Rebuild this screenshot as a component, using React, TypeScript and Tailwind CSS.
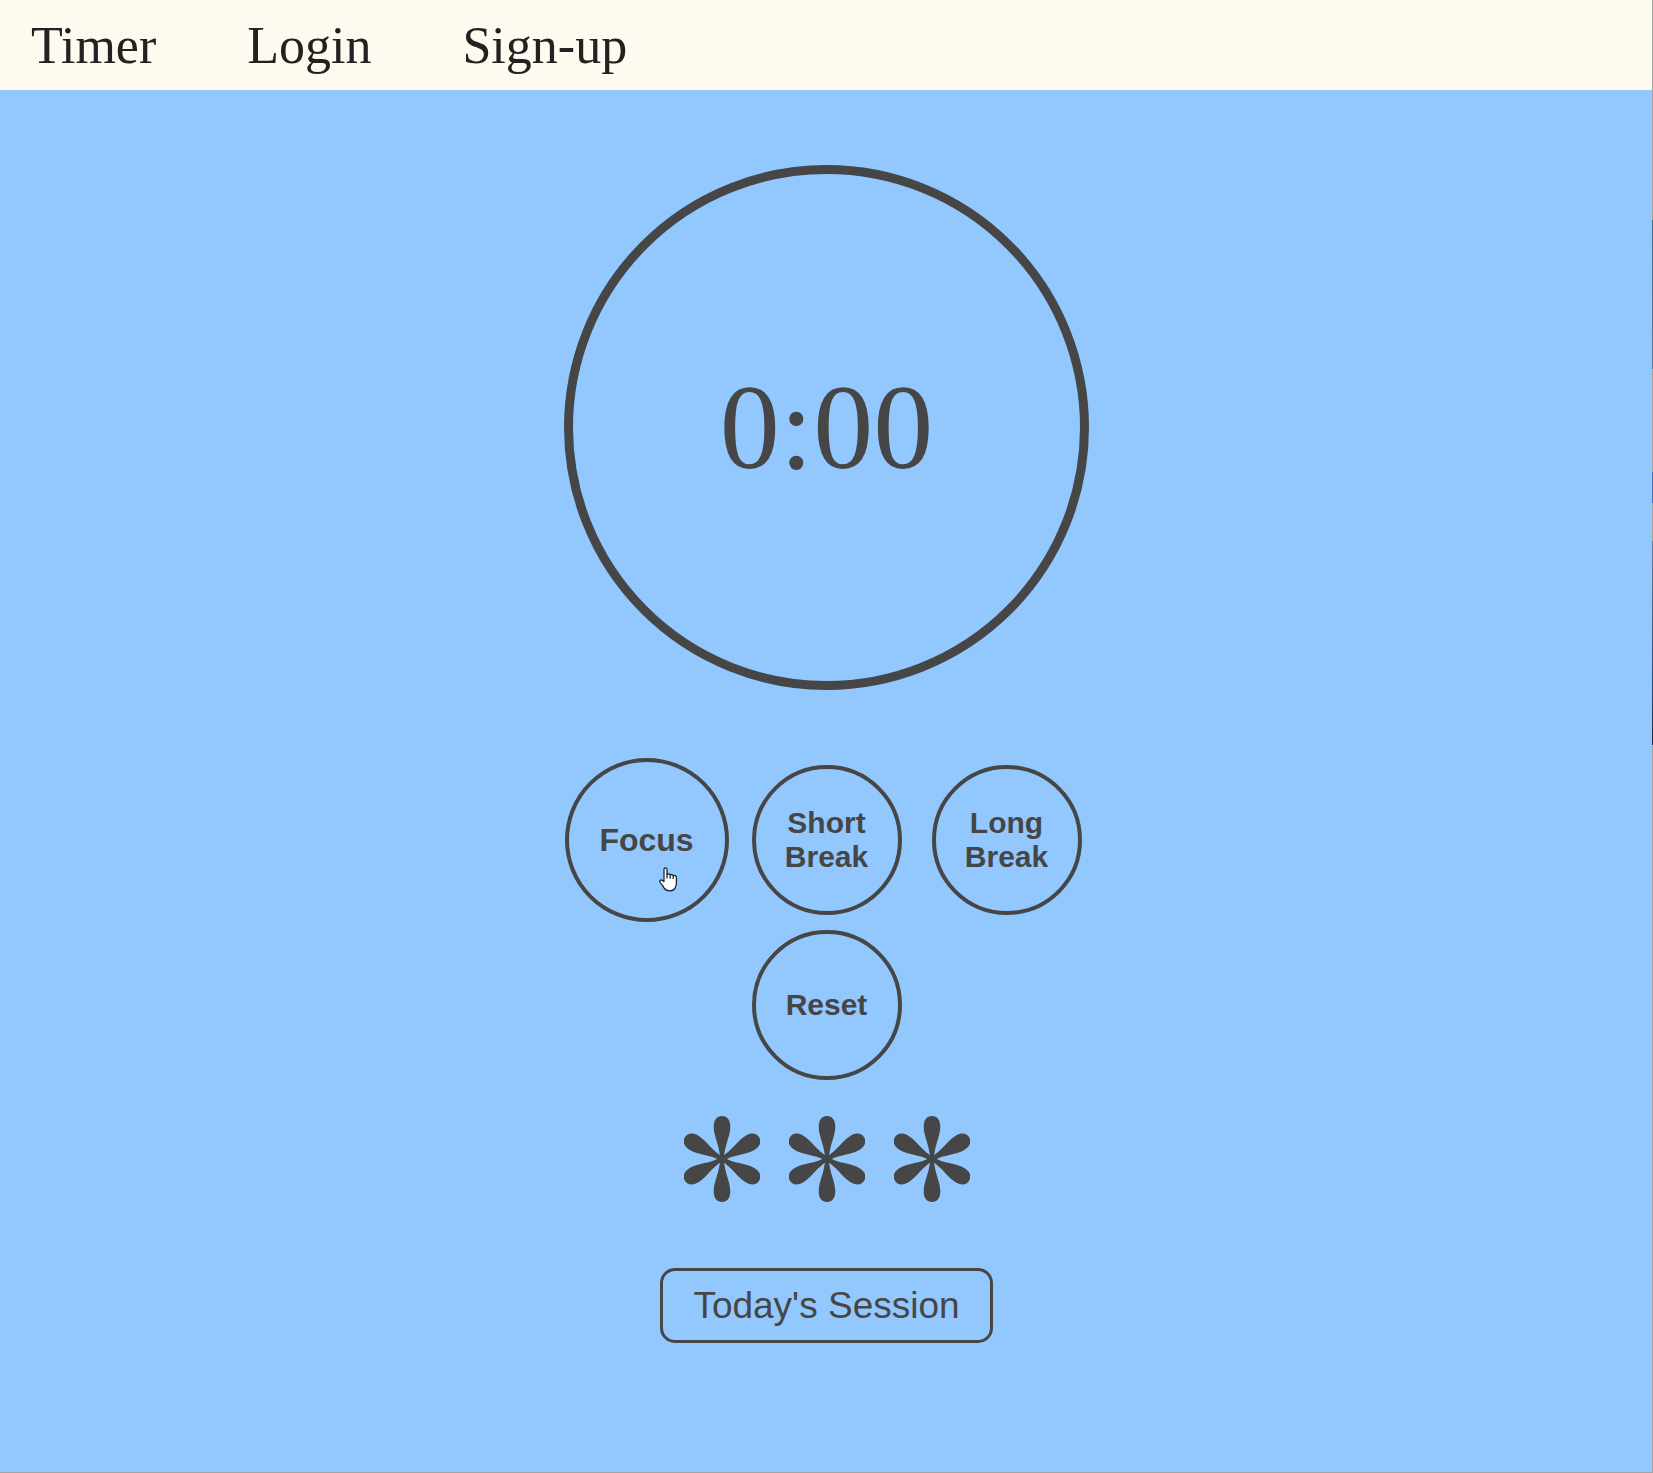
const links = ["Timer", "Login", "Sign-up"];

const roundButton =
  "flex size-[150px] items-center justify-center rounded-full border-4 border-[#464646] text-center text-[30px] leading-[34px] font-bold";

const petalAngles = [0, 60, 120, 180, 240, 300];

function SessionMark() {
  return (
    <svg width="76" height="86" viewBox="0 0 76 86" fill="#464646" aria-hidden="true">
      {petalAngles.map((angle) => (
        <path
          key={angle}
          transform={`rotate(${angle} 38 43)`}
          d="M36 43C36 30 29.700 21 29.700 10.500C29.700 4 33 0 38 0C43 0 46.300 4 46.300 10.500C46.300 21 40 30 40 43Z"
        />
      ))}
      <circle cx="38" cy="43" r="4.500" />
    </svg>
  );
}

function HandPointer() {
  return (
    <svg
      className="pointer-events-none absolute top-[105px] left-[90px]"
      width="19"
      height="26"
      viewBox="0 0 19 26"
      aria-hidden="true"
    >
      <path
        d="M5 14.500V2.300a1.500 1.500 0 0 1 3 0V7.500c.8-.9 2.800-.7 3.200.5.8-.8 2.700-.5 3 .8.900-.6 3.200-.2 3.200 1.500v6c0 2.200-.8 3.500-1.500 5-.8 1.800-2.500 2.500-5 2.500-3 0-4.500-.7-5.700-2.700C4 18.900 2.500 17.500 1.100 15.200c-.8-1.500.4-2.600 1.700-2.100.9.3 1.500.7 2.200 1.400z"
        fill="#fff"
        stroke="#111827"
        strokeWidth="1.2"
        strokeLinejoin="round"
      />
      <path d="M8 7.200v4.300M11.200 8v3.800M14.200 9v3" stroke="#111827" strokeWidth="1.2" fill="none" />
    </svg>
  );
}

export default function App() {
  return (
    <div className="relative flex min-h-screen flex-col bg-[#93c8ff] font-['Liberation_Sans',Arial,sans-serif] text-[#464646]">
      <nav className="flex h-[90px] shrink-0 items-center gap-[91px] bg-[#fffaf0] px-[31px] pt-[2px] font-['Liberation_Serif','Times_New_Roman',serif] text-[52px] leading-[60px] text-[#222222]">
        {links.map((name) => (
          <a key={name} href={"#" + name.toLowerCase()}>
            {name}
          </a>
        ))}
      </nav>
      <main className="flex flex-col items-center pt-[75px]">
        <div
          role="timer"
          className="flex size-[525px] items-center justify-center rounded-full border-[9px] border-[#464646] font-['Liberation_Serif','Times_New_Roman',serif] text-[120px] leading-none"
        >
          0:00
        </div>
        <div className="mt-[75px] flex gap-[30px]">
          <button
            type="button"
            className="relative -m-[7px] flex size-[164px] items-center justify-center rounded-full border-4 border-[#464646] text-[32px] leading-[38px] font-bold"
          >
            Focus
            <HandPointer />
          </button>
          <button type="button" className={roundButton}>
            Short
            <br />
            Break
          </button>
          <button type="button" className={roundButton}>
            Long
            <br />
            Break
          </button>
        </div>
        <button type="button" className={"mt-[15px] " + roundButton}>
          Reset
        </button>
        <div className="mt-[36px] flex gap-[29px]">
          <SessionMark />
          <SessionMark />
          <SessionMark />
        </div>
        <button
          type="button"
          className="mt-[66px] h-[75px] rounded-[15px] border-3 border-[#464646] px-[30px] text-[37px] leading-[44px]"
        >
          Today's Session
        </button>
      </main>
      <div className="pointer-events-none absolute inset-y-0 right-0 w-px bg-[#a3a3a3] bg-[linear-gradient(to_bottom,#a3a3a3_220px,#4d6a8a_220px,#5f7a96_369px,#a3a3a3_369px,#a3a3a3_472px,#4f70ae_472px,#4f70ae_503px,#a3a3a3_503px,#a3a3a3_541px,#6b8096_541px,#2f4a70_680px,#1c2c44_745px,#a3a3a3_745px)]" />
      <div className="pointer-events-none absolute inset-x-0 bottom-0 h-px bg-[#a3a3a3]" />
    </div>
  );
}
